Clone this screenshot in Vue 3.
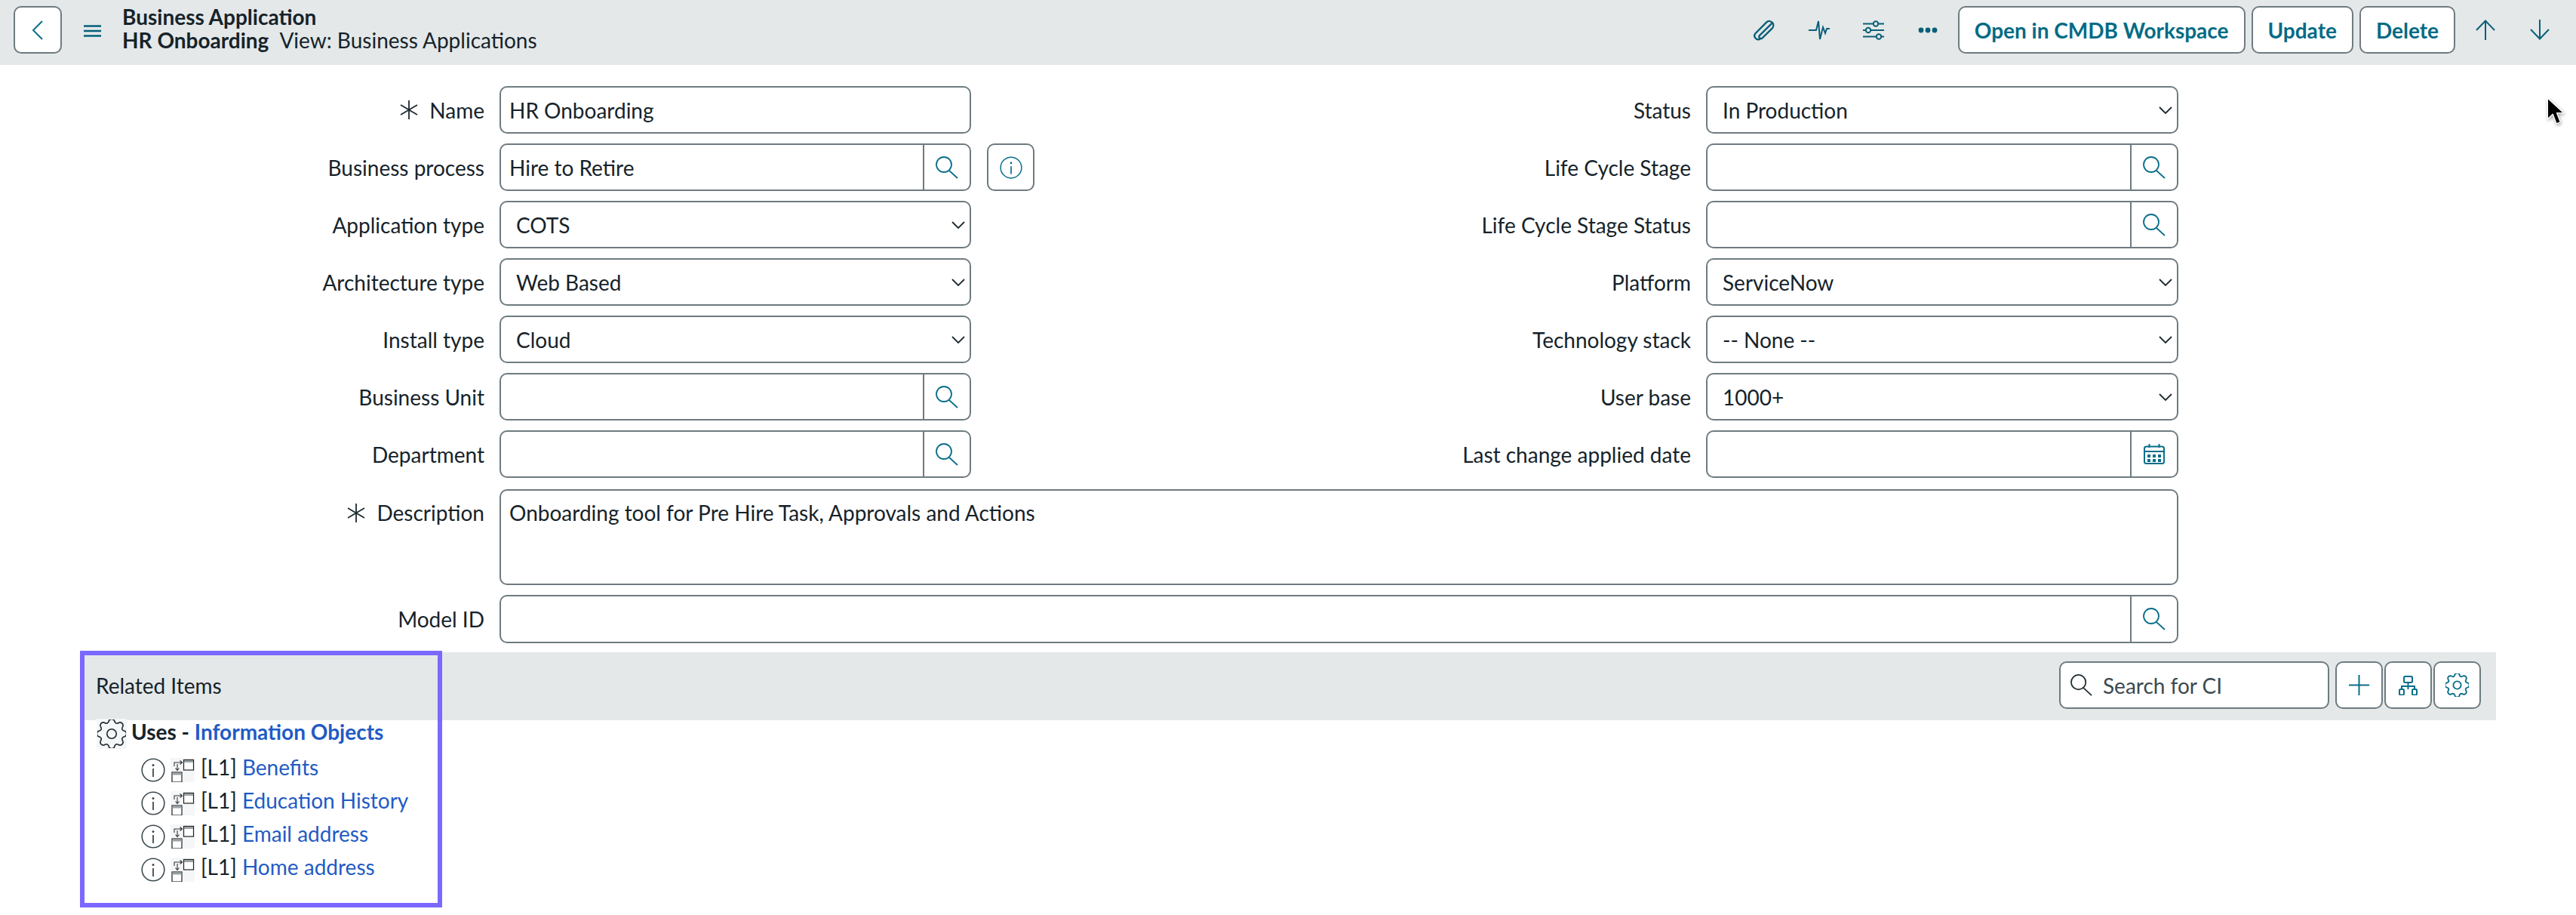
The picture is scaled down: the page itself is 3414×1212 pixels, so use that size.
<script setup>
// gear outline with 8 rounded lobes, centred in a 28x28 box
const gearPath = (() => {
  const pt = (r, deg) => {
    const a = ((deg - 90) * Math.PI) / 180
    return `${(14 + r * Math.cos(a)).toFixed(2)} ${(14 + r * Math.sin(a)).toFixed(2)}`
  }
  let d = `M${pt(13.3, -11)}`
  for (let i = 0; i < 8; i++) {
    const a = i * 45
    d += ` A3 3 0 0 1 ${pt(13.3, a + 11)} Q${pt(9.2, a + 22.5)} ${pt(13.3, a + 34)}`
  }
  return d + ' Z'
})()

const fields = [
  { label: 'Name', required: true, kind: 'text', value: 'HR Onboarding' },
  { label: 'Status', kind: 'select', value: 'In Production' },
  { label: 'Business process', kind: 'lookup', value: 'Hire to Retire' },
  { label: 'Life Cycle Stage', kind: 'lookup', value: '', infoBefore: true },
  { label: 'Application type', kind: 'select', value: 'COTS' },
  { label: 'Life Cycle Stage Status', kind: 'lookup', value: '' },
  { label: 'Architecture type', kind: 'select', value: 'Web Based' },
  { label: 'Platform', kind: 'select', value: 'ServiceNow' },
  { label: 'Install type', kind: 'select', value: 'Cloud' },
  { label: 'Technology stack', kind: 'select', value: '-- None --' },
  { label: 'Business Unit', kind: 'lookup', value: '' },
  { label: 'User base', kind: 'select', value: '1000+' },
  { label: 'Department', kind: 'lookup', value: '' },
  { label: 'Last change applied date', kind: 'date', value: '' },
]

const relatedItems = ['Benefits', 'Education History', 'Email address', 'Home address']
</script>

<template>
  <div class="page">
    <svg class="defs" aria-hidden="true">
      <symbol id="i-search" viewBox="0 0 30 30">
        <circle cx="11" cy="11" r="10" fill="none" stroke="currentColor" stroke-width="1.8" />
        <path d="M18 19 L29 29" stroke="currentColor" stroke-width="1.8" fill="none" />
      </symbol>
      <symbol id="i-gear" viewBox="0 0 28 28">
        <path :d="gearPath" fill="none" stroke="currentColor" stroke-linejoin="round" />
        <circle cx="14" cy="14" r="4.6" fill="none" stroke="currentColor" />
      </symbol>
      <symbol id="i-info" viewBox="0 0 32 32">
        <circle cx="16" cy="16" r="14.8" fill="none" stroke="currentColor" stroke-width="1.6" />
        <circle cx="16" cy="9.5" r="1.5" fill="currentColor" />
        <path d="M16 14 V25" stroke="currentColor" stroke-width="1.8" />
      </symbol>
    </svg>

    <header class="topbar">
      <button class="btn back">
        <svg width="16" height="26" viewBox="0 0 16 26"><path d="M14 1 L2 13 L14 25" class="line" /></svg>
      </button>
      <svg class="burger" width="23" height="16" viewBox="0 0 23 16">
        <path d="M0 1.5 H23 M0 8 H23 M0 14.5 H23" stroke="#03607a" stroke-width="2.6" />
      </svg>
      <div class="title">
        <div class="title-strong">Business Application</div>
        <div><span class="title-strong">HR Onboarding</span><span class="view">View: Business Applications</span></div>
      </div>

      <div class="actions">
        <span class="tool">
          <svg class="clip" width="30" height="30" viewBox="0 0 24 24">
            <path d="M21.4 4.2 L8.4 19 a2.2 2.2 0 0 0 3.2 2.6 L22 9.8 a4.6 4.6 0 0 0 -6.6 -6.4 L4 16.6 a4 4 0 0 0 5.6 5.6" class="line dark" stroke-width="1.5" transform="rotate(4 12 12) scale(.96)" />
          </svg>
        </span>
        <span class="tool">
          <svg width="28" height="26" viewBox="0 0 28 26"><path d="M0 13 H10 L13 1 L15 25 L19 9 L22 17 L24 11 H28" class="line dark" /></svg>
        </span>
        <span class="tool">
          <svg width="28" height="26" viewBox="0 0 28 26">
            <path d="M0 4.5 H28 M0 13 H28 M0 21.5 H28" class="line dark" stroke-width="2.4" />
            <circle cx="17" cy="4.5" r="3.2" class="knob" />
            <circle cx="7" cy="13" r="3.2" class="knob" />
            <circle cx="21" cy="21.5" r="3.2" class="knob" />
          </svg>
        </span>
        <span class="tool">
          <svg width="26" height="8" viewBox="0 0 26 8">
            <circle cx="4" cy="4" r="3.4" fill="#0a5f78" /><circle cx="13" cy="4" r="3.4" fill="#0a5f78" /><circle cx="22" cy="4" r="3.4" fill="#0a5f78" />
          </svg>
        </span>
        <button class="btn text-btn first">Open in CMDB Workspace</button>
        <button class="btn text-btn">Update</button>
        <button class="btn text-btn last">Delete</button>
        <span class="tool">
          <svg width="26" height="27" viewBox="0 0 26 27"><path d="M13 27 V1.5 M1 14 L13 1.5 L25 14" class="line dark" /></svg>
        </span>
        <span class="tool">
          <svg width="26" height="27" viewBox="0 0 26 27"><path d="M13 0 V25.5 M1 13 L13 25.5 L25 13" class="line dark" /></svg>
        </span>
      </div>
    </header>

    <form class="form" @submit.prevent>
      <template v-for="f in fields" :key="f.label">
        <div class="label" :class="{ 'with-info': f.infoBefore }">
          <button v-if="f.infoBefore" class="btn square info-btn">
            <svg width="30" height="30" class="teal"><use href="#i-info" /></svg>
          </button>
          <span class="label-text">
            <svg v-if="f.required" class="req" width="24" height="25" viewBox="0 0 24 25">
              <path d="M12 0 V25 M1 6 L23 19 M23 6 L1 19" stroke="#1c2a30" stroke-width="1.8" fill="none" />
            </svg>
            <span>{{ f.label }}</span>
          </span>
        </div>

        <div class="control" :class="f.kind">
          <span class="value">{{ f.value }}</span>
          <svg v-if="f.kind === 'select'" class="chev" width="18" height="10" viewBox="0 0 18 10">
            <path d="M1 1 L9 9 L17 1" stroke="#1c2a30" stroke-width="1.8" fill="none" />
          </svg>
          <span v-if="f.kind === 'lookup'" class="addon">
            <svg width="30" height="30" class="teal"><use href="#i-search" /></svg>
          </span>
          <span v-if="f.kind === 'date'" class="addon">
            <svg width="28" height="27" viewBox="0 0 28 27" class="teal">
              <rect x="1" y="3.5" width="26" height="22.5" rx="2.5" fill="none" stroke="currentColor" stroke-width="2" />
              <path d="M1 10 H27" stroke="currentColor" stroke-width="2" />
              <path d="M7.5 0 V5 M20.5 0 V5" stroke="currentColor" stroke-width="2" />
              <path d="M5 14 h4 v4 h-4 z M12 14 h4 v4 h-4 z M19 14 h4 v4 h-4 z M5 20 h4 v4 h-4 z M12 20 h4 v4 h-4 z M19 20 h4 v4 h-4 z" fill="currentColor" />
            </svg>
          </span>
        </div>
      </template>

      <div class="label desc-label">
        <span class="label-text">
          <svg class="req" width="24" height="25" viewBox="0 0 24 25">
            <path d="M12 0 V25 M1 6 L23 19 M23 6 L1 19" stroke="#1c2a30" stroke-width="1.8" fill="none" />
          </svg>
          <span>Description</span>
        </span>
      </div>
      <div class="control wide textarea">
        <span class="value">Onboarding tool for Pre Hire Task, Approvals and Actions</span>
      </div>

      <div class="label">
        <span class="label-text">Model ID</span>
      </div>
      <div class="control wide lookup">
        <span class="value"></span>
        <span class="addon">
          <svg width="30" height="30" class="teal"><use href="#i-search" /></svg>
        </span>
      </div>
    </form>

    <section class="related">
      <div class="related-bar">
        <span class="related-title">Related Items</span>
        <div class="search-ci">
          <svg width="29" height="29" class="ink"><use href="#i-search" /></svg>
          <span>Search for CI</span>
        </div>
        <button class="btn square plus">
          <svg width="27" height="27" viewBox="0 0 27 27"><path d="M13.5 0 V27 M0 13.5 H27" class="line" /></svg>
        </button>
        <button class="btn square">
          <svg width="25" height="26" viewBox="0 0 25 26" class="teal">
            <rect x="7" y="1" width="11" height="8" rx="1.5" fill="none" stroke="currentColor" stroke-width="2" />
            <rect x="1" y="18" width="6" height="7.5" rx="1.5" fill="none" stroke="currentColor" stroke-width="2" />
            <rect x="18" y="18" width="6" height="7.5" rx="1.5" fill="none" stroke="currentColor" stroke-width="2" />
            <path d="M12.5 9 V18 M4 18 V14 H21 V18" fill="none" stroke="currentColor" stroke-width="2" />
          </svg>
        </button>
        <button class="btn square">
          <svg width="31" height="31" class="teal gear-strong"><use href="#i-gear" /></svg>
        </button>
      </div>

      <div class="tree">
        <div class="tree-head">
          <span class="gear-box">
            <svg width="38" height="38" class="ink gear-thin"><use href="#i-gear" /></svg>
          </span>
          <span class="tree-head-text">Uses - <a class="link">Information Objects</a></span>
        </div>
        <div v-for="item in relatedItems" :key="item" class="tree-row">
          <svg class="tree-info" width="32" height="32"><use href="#i-info" /></svg>
          <svg class="rel-icon" width="32" height="32" viewBox="0 0 32 32">
            <rect x="17.5" y="2.5" width="13" height="13.5" fill="#fff" stroke="#222" stroke-width="1.2" />
            <rect x="18" y="3" width="12" height="3" fill="#9aa3a7" />
            <rect x="2" y="19" width="13" height="13" fill="#fff" stroke="#222" stroke-width="1.2" />
            <rect x="2.5" y="19.5" width="12" height="3" fill="#9aa3a7" />
            <path d="M5 11 V6 H15 M12.5 3.5 L15.5 6 L12.5 8.5 M9 8 V16 M6.5 13.5 L9 16.5 L11.5 13.5" fill="none" stroke="#333" stroke-width="1.1" />
          </svg>
          <span class="tree-text">[L1] <a class="link">{{ item }}</a></span>
        </div>
      </div>

      <div class="highlight"></div>
    </section>

    <svg class="cursor" width="26" height="38" viewBox="0 0 24 36">
      <path d="M1 1 V27 L7.5 21 L12 33 L17 31 L12.5 19.5 L21 19.5 Z" fill="#000" stroke="#fff" stroke-width="1.2" stroke-linejoin="round" />
    </svg>
  </div>
</template>

<style scoped>
.page {
  position: relative;
  width: 3414px;
  height: 1212px;
  overflow: hidden;
  background: #fff;
  color: #16232a;
  font-family: Lato, "Liberation Sans", sans-serif;
  font-size: 28px;
}

.defs {
  position: absolute;
  width: 0;
  height: 0;
}

.line {
  fill: none;
  stroke: #0a6e8a;
  stroke-width: 2;
}

.line.dark {
  stroke: #0a5f78;
}

.knob {
  fill: #e4e8e9;
  stroke: #0a5f78;
  stroke-width: 2;
}

.teal {
  color: #0a6e8a;
}

.ink {
  color: #1c2a30;
}

.gear-strong {
  stroke-width: 1.7;
}

.gear-thin {
  stroke-width: 1.2;
}

/* top bar */
.topbar {
  display: flex;
  align-items: flex-start;
  height: 86px;
  box-sizing: border-box;
  padding: 8px 12px 0 18px;
  background: #e4e8e9;
}

.btn {
  display: flex;
  align-items: center;
  justify-content: center;
  box-sizing: border-box;
  height: 63px;
  padding: 0;
  background: #fff;
  border: 2px solid #6e7b80;
  border-radius: 10px;
  color: #046b85;
  font: inherit;
}

.back {
  width: 64px;
}

.burger {
  margin: 25px 0 0 29px;
}

.title {
  margin: -1px 0 0 28px;
  line-height: 31px;
}

.title-strong {
  font-weight: 700;
}

.view {
  margin-left: 14px;
}

.actions {
  display: flex;
  align-items: flex-start;
  margin-left: auto;
}

.tool {
  display: flex;
  align-items: center;
  justify-content: center;
  width: 72px;
  height: 63px;
}

.clip {
  margin-right: 4px;
}

.text-btn {
  padding: 0 20px;
  margin-left: 8px;
  font-weight: 700;
}

.text-btn.first {
  margin-left: 4px;
}

.text-btn.last {
  margin-right: 4px;
}

/* form */
.form {
  display: grid;
  grid-template-columns: 642px 625px 934px 626px;
  grid-template-rows: repeat(7, 63px) 129px 64px;
  column-gap: 20px;
  row-gap: 13px;
  padding-top: 28px;
}

.label {
  display: flex;
  align-items: center;
  justify-content: flex-end;
}

.label.with-info {
  justify-content: space-between;
}

.info-btn {
  margin-left: 1px;
}

.label-text {
  display: flex;
  align-items: center;
  gap: 15px;
}

.control {
  display: flex;
  align-items: center;
  box-sizing: border-box;
  padding-left: 11px;
  border: 2px solid #6e7b80;
  border-radius: 10px;
  background: #fff;
}

.control.select {
  padding-left: 20px;
}

.control.wide {
  grid-column: 2 / -1;
}

.value {
  flex: 1;
}

.chev {
  margin-right: 6px;
}

.addon {
  display: flex;
  align-items: center;
  justify-content: center;
  align-self: stretch;
  width: 60px;
  border-left: 2px solid #6e7b80;
}

.square {
  width: 63px;
  flex: none;
}

.control.textarea {
  align-items: flex-start;
  height: 127px;
  margin-top: 2px;
  padding-top: 12px;
}

.desc-label {
  align-items: flex-start;
  padding-top: 16px;
}

/* related items */
.related {
  position: relative;
  margin: 12px 106px 0 108px;
}

.related-bar {
  display: flex;
  align-items: center;
  gap: 2px;
  height: 90px;
  box-sizing: border-box;
  padding: 0 20px 3px 19px;
  background: #e4e8e9;
}

.related-title {
  margin-right: auto;
}

.search-ci {
  display: flex;
  align-items: center;
  gap: 14px;
  box-sizing: border-box;
  width: 358px;
  height: 63px;
  margin-right: 6px;
  padding-left: 13px;
  background: #fff;
  border: 2px solid #6e7b80;
  border-radius: 10px;
  color: #3b4a50;
}

.tree {
  margin-top: -2px;
  padding-left: 20px;
}

.tree-head {
  display: flex;
  height: 52px;
  gap: 6px;
}

.gear-box {
  display: flex;
  align-items: center;
  justify-content: center;
  width: 40px;
  height: 40px;
  background: #f5f6f7;
}

.tree-head-text {
  font-weight: 700;
  line-height: 34px;
  white-space: pre;
}

.link {
  color: #1f5bc4;
}

.tree-row {
  display: flex;
  height: 44px;
  padding-left: 59px;
}

.tree-info {
  color: #3c4a4f;
  margin-right: 7px;
}

.rel-icon {
  background: #f4f6f8;
  margin-right: 8px;
}

.tree-text {
  line-height: 25px;
  white-space: pre;
}

/* annotation frame drawn over the section */
.highlight {
  position: absolute;
  left: -2px;
  top: -2px;
  width: 480px;
  height: 340px;
  box-sizing: border-box;
  border: 6px solid #7b68ff;
  pointer-events: none;
}

.cursor {
  position: absolute;
  left: 3375px;
  top: 129px;
  filter: drop-shadow(1px 2px 2px rgba(0, 0, 0, 0.35));
}
</style>

<style>
html,
body {
  background: #fff;
}
</style>
